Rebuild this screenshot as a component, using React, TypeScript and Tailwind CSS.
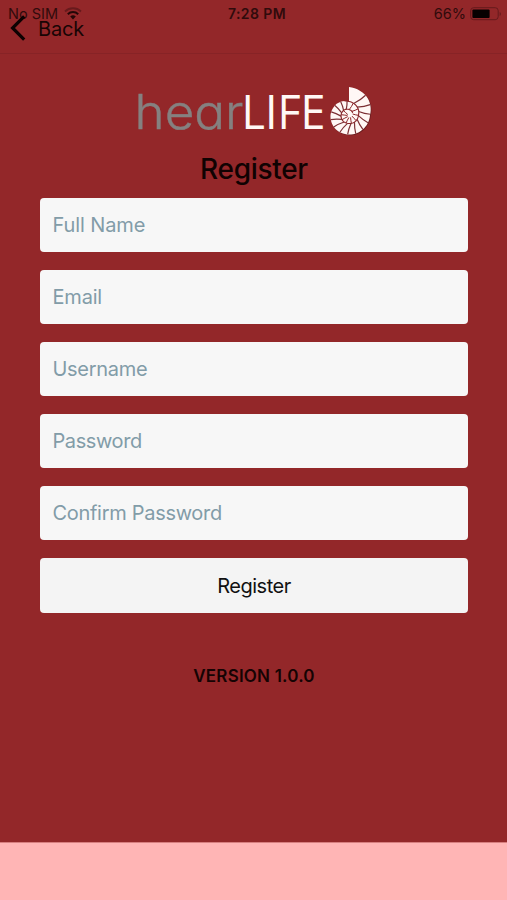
import { clsx } from 'clsx'

const FIELDS = [
  { name: 'fullName', label: 'Full Name', type: 'text', tracking: 'tracking-[-0.1px]' },
  { name: 'email', label: 'Email', type: 'email', tracking: 'tracking-[-0.2px]' },
  { name: 'username', label: 'Username', type: 'text', tracking: 'tracking-[-0.3px]' },
  { name: 'password', label: 'Password', type: 'password', tracking: 'tracking-[-0.4px]' },
  { name: 'confirmPassword', label: 'Confirm Password', type: 'password', tracking: 'tracking-[-0.3px]' },
]

// shell radius at each eighth of a turn, clockwise from the tip of the opening
const RADII = [28, 25.5, 21, 20, 19.5, 19.5, 18.5, 16.5, 13.5, 11.5, 9.5, 9, 8.5, 8.5, 8, 7, 5.5, 4.5, 3.5, 3, 2.5, 2, 1.5, 1, 0.5]

function radiusAt(deg: number) {
  const t = Math.min(deg / 45, RADII.length - 1.001)
  const i = Math.floor(t)
  return RADII[i] + (RADII[i + 1] - RADII[i]) * (t - i)
}

function point(deg: number, r: number) {
  const a = (deg * Math.PI) / 180
  return `${(r * Math.sin(a)).toFixed(2)} ${(-r * Math.cos(a)).toFixed(2)}`
}

function spiral(from: number, to: number) {
  const pts: string[] = []
  for (let d = from; d <= to; d += 6) pts.push(point(d, radiusAt(d)))
  return 'M' + pts.join('L')
}

function chambers(from: number, count: number, step: number) {
  return Array.from({ length: count }, (_, i) => from + i * step)
    .map((d) => {
      const outer = radiusAt(d)
      const inner = radiusAt(d + 345)
      return `M${point(d, outer)}Q${point(d - 2, (outer + inner) / 2)} ${point(d - 18, inner)}`
    })
    .join('')
}

function Shell() {
  return (
    <g transform="translate(215 35)">
      <path d={spiral(0, 360) + 'Z'} fill="#4f1517" transform="translate(0.7 0.7)" opacity="0.6" />
      <path d={spiral(0, 360) + 'Z'} fill="#fff7f5" />
      <path d={spiral(342, 780)} fill="none" stroke="#8b2428" strokeWidth="1.1" />
      <path d={chambers(40, 14, 24)} fill="none" stroke="#7c3035" strokeWidth="1.2" />
      <path d={chambers(380, 9, 36)} fill="none" stroke="#8b2428" strokeWidth="1" />
    </g>
  )
}

function Logo() {
  return (
    <svg width="240" height="60" viewBox="0 0 240 60" role="img" aria-label="hearLIFE" overflow="visible">
      <text
        x="0.5"
        y="49"
        textLength="109"
        lengthAdjust="spacingAndGlyphs"
        fill="#858180"
        stroke="#858180"
        strokeWidth="0.4"
        className="font-['Inter'] text-[48px] font-light [font-feature-settings:'cv11']"
      >
        hear
      </text>
      <text
        x="107.5"
        y="49"
        textLength="84"
        lengthAdjust="spacingAndGlyphs"
        fill="#fff8f6"
        className="font-['Open_Sans'] text-[48px] font-normal"
      >
        LIFE
      </text>
      <Shell />
    </svg>
  )
}

function WifiIcon() {
  return (
    <svg width="18" height="13" viewBox="0 0 18 13" fill="none">
      <path d="M1 4.5a11.5 11.5 0 0 1 16 0" stroke="#681a1c" strokeWidth="1.8" />
      <path d="M3.8 7.2a7.5 7.5 0 0 1 10.4 0" stroke="#240707" strokeWidth="2" />
      <path d="M6.2 9.6a4 4 0 0 1 5.6 0L9 12.4z" fill="#240707" />
    </svg>
  )
}

function BatteryIcon() {
  return (
    <svg width="32" height="14" viewBox="0 0 32 14" fill="none">
      <rect x="0.7" y="0.7" width="27.5" height="12" rx="3" stroke="#651a1c" />
      <rect x="2.4" y="2.4" width="17.2" height="8.6" rx="1" fill="#080101" />
      <path d="M29.7 5v4c1.6-.6 1.6-3.4 0-4z" fill="#651a1c" />
    </svg>
  )
}

function BackIcon() {
  return (
    <svg width="16" height="26" viewBox="0 0 16 26" fill="none">
      <path d="M14.2 1.4 2.6 13l11.6 11.6" stroke="#0d0202" strokeWidth="3.2" />
    </svg>
  )
}

function Header() {
  return (
    <header className="relative h-[54px] border-b border-[#872326]">
      <div className="grid h-[27px] grid-cols-3 items-center pl-2 pr-[5px] text-[14px] text-[#300b0c]">
        <div className="flex items-center gap-[6px]">
          <span className="text-[14.5px]">No SIM</span>
          <WifiIcon />
        </div>
        <span className="pl-[4px] text-center text-[14px] font-semibold tracking-[0.4px]">7:28 PM</span>
        <div className="flex items-center justify-end gap-[4px]">
          <span className="text-[14.5px]">66%</span>
          <BatteryIcon />
        </div>
      </div>
      {/* back button runs up under the status bar */}
      <button className="absolute left-[10px] top-[13px] flex items-center text-[20px] leading-[28px] text-[#180505]">
        <BackIcon />
        <span className="mt-[2px] ml-[12px] tracking-[-0.2px]">Back</span>
      </button>
    </header>
  )
}

export default function App() {
  return (
    <div className="flex h-[900px] w-[507px] flex-col bg-[#932729] font-['Inter','Liberation_Sans',sans-serif]">
      <Header />
      <main className="flex flex-1 flex-col items-center pl-10 pr-[39px] pt-[26px]">
        <Logo />
        <h1 className="mt-[11px] text-[28px] font-medium leading-[36px] tracking-[-0.3px] text-[#100202]">Register</h1>
        <form className="mt-[11px] flex w-full flex-col gap-[18px]" onSubmit={(e) => e.preventDefault()}>
          {FIELDS.map((field) => (
            <input
              key={field.name}
              name={field.name}
              type={field.type}
              placeholder={field.label}
              className={clsx(
                'h-[54px] w-full rounded-[4px] bg-[#f7f7f7] px-[12.5px] text-[20px] outline-none placeholder:text-[#829ca8]',
                field.tracking,
              )}
            />
          ))}
          <button className="h-[55px] rounded-[4px] bg-[#f4f4f4] text-[20px] tracking-[-0.5px] text-[#111]">
            Register
          </button>
        </form>
        <p className="mt-[51px] text-[17px] font-semibold leading-6 tracking-[0.2px] text-[#150303]">VERSION 1.0.0</p>
      </main>
      <footer className="h-[58px] border-t border-[#d77f7f] bg-[#ffb5b5]" />
    </div>
  )
}
